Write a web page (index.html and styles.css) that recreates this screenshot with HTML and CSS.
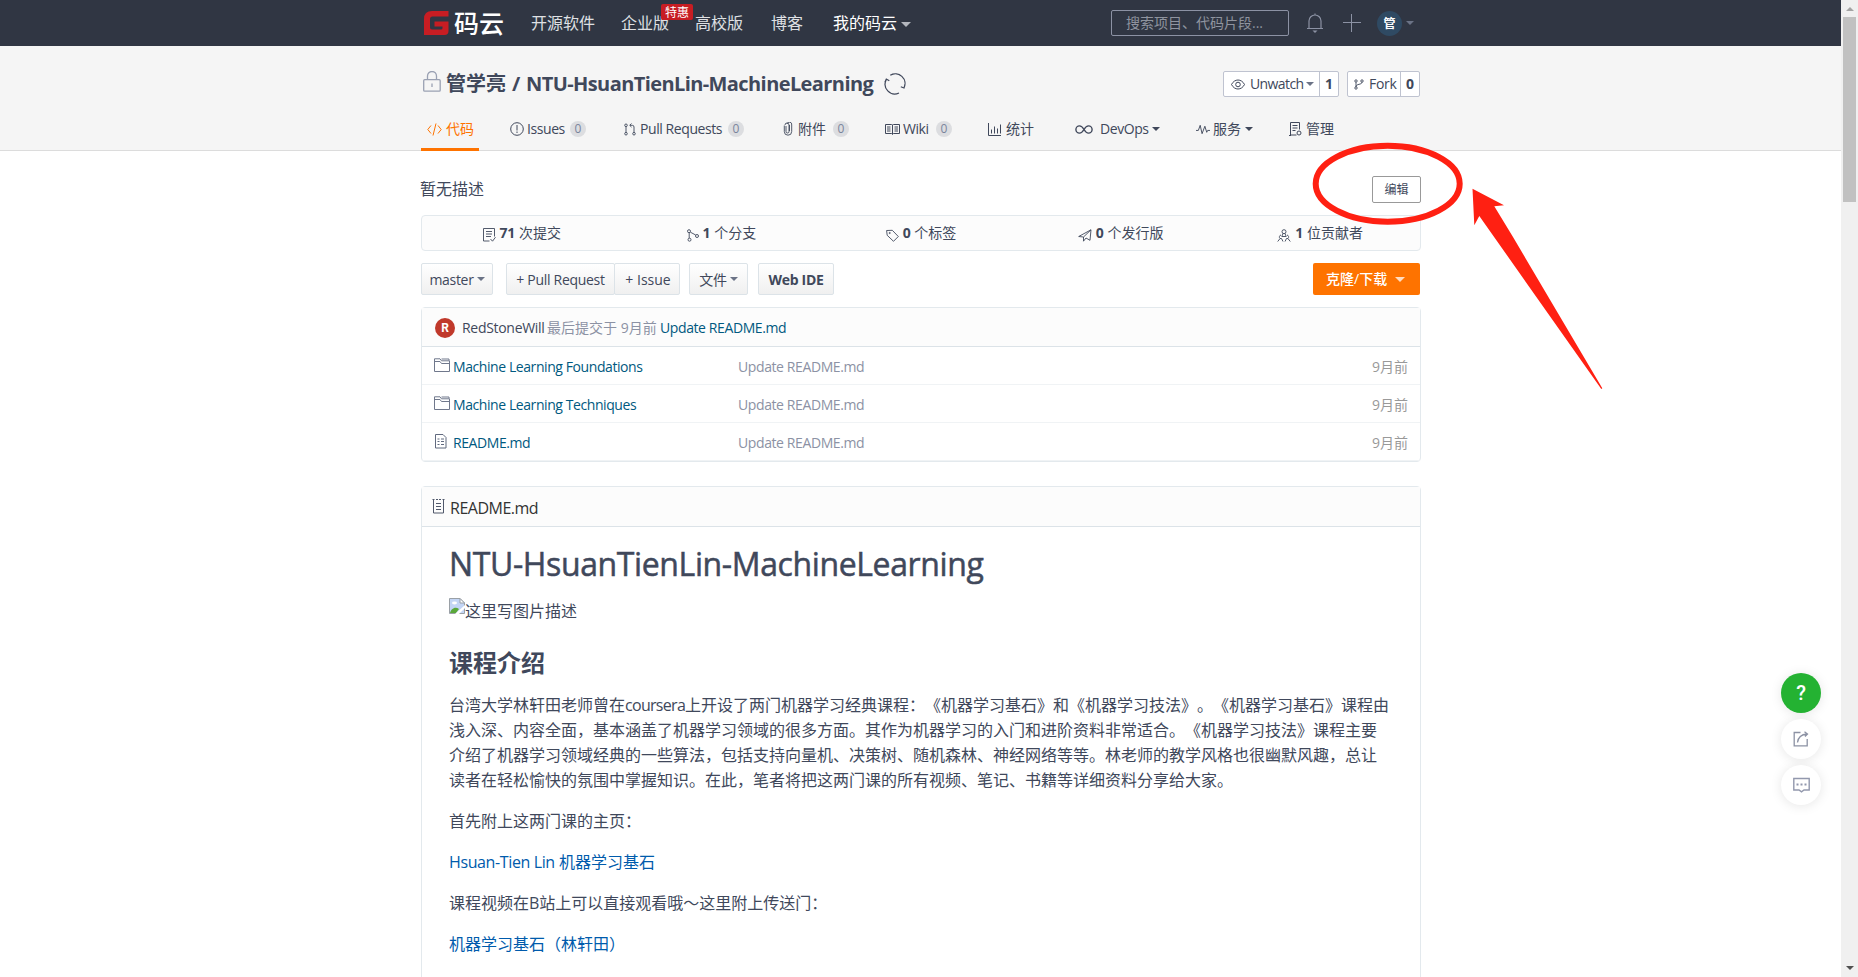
FILE: index.html
```html
<!DOCTYPE html>
<html lang="zh-CN">
<head>
<meta charset="utf-8">
<title>NTU-HsuanTienLin-MachineLearning</title>
<link rel="stylesheet" href="styles.css">
</head>
<body>
<div class="page">
  <header class="topbar">
    <div class="wrap topbar-in">
      <a class="logo">
        <svg width="25" height="24" viewBox="0 0 25 24"><path d="M24.500 0v5.500H8.500q-2.500 0-2.500 2.500v8.500q0 2 2 2h9q1.500 0 1.500-1.500v-1.500h-8v-5h14v9.500q0 4-4 4H0V8Q0 0 8 0z" fill="#c71d23"/></svg>
        <span>码云</span>
      </a>
      <nav class="nav">
        <a>开源软件</a>
        <a class="n2">企业版<i class="hot">特惠</i></a>
        <a class="n3">高校版</a>
        <a class="n4">博客</a>
        <a class="n5">我的码云<b class="caret big"></b></a>
      </nav>
      <div class="search">搜索项目、代码片段...</div>
      <svg class="bell" width="18" height="21" viewBox="0 0 18 21" fill="none" stroke="#8c92a4" stroke-width="1.2"><path d="M1 15.500h16M3 15.500V8a6 6 0 0 1 12 0v7.500M9 2V.5"/><path d="M6.500 17.500h5L9 20z" fill="#8c92a4" stroke="none"/></svg>
      <svg class="plus" width="18" height="18" viewBox="0 0 18 18" stroke="#8c92a4"><path d="M0 8.500h18M8.500 0v18"/></svg>
      <span class="me">管</span><b class="caret"></b>
    </div>
  </header>

  <section class="repohead">
    <div class="wrap">
      <div class="titlebar">
        <svg class="lock" width="18" height="21" viewBox="0 0 18 21" fill="none" stroke="#9aa1b3" stroke-width="1.300"><rect x=".7" y="8.700" width="16.500" height="11.500" rx="1"/><path d="M4.500 8.500V5a4.500 4.500 0 0 1 9 0v3.500M9 12.500v3.500"/></svg>
        <h2 class="title"><span class="owner">管学亮</span><span class="slash">/</span><span class="rname">NTU-HsuanTienLin-MachineLearning</span></h2>
        <svg class="sync" width="22" height="22" viewBox="0 0 22 22" fill="none" stroke="#40485b" stroke-width="1.200"><path d="M6.300 2.200A9.700 9.700 0 0 1 20 14.800M20.900 11.800L20 15l-3.200-1.200M15 20A9.700 9.700 0 0 1 2.400 6.500M.9 9.300L2.300 6l3 1.800"/></svg>
        <div class="btnpair watch">
          <span class="pl"><svg width="14" height="11" viewBox="0 0 14 11" fill="none" stroke="#40485b"><path d="M.5 5.500C3.500-.5 10.500-.5 13.500 5.500 10.500 11.500 3.500 11.500.5 5.500z"/><circle cx="7" cy="5.500" r="2.300"/></svg><em>Unwatch</em><b class="caret"></b></span><strong>1</strong>
        </div>
        <div class="btnpair fork">
          <span class="pl"><svg width="10" height="11" viewBox="0 0 10 11" fill="none" stroke="#40485b" stroke-width=".9"><circle cx="2" cy="2" r="1.200"/><circle cx="8" cy="2" r="1.200"/><circle cx="2" cy="9" r="1.200"/><path d="M2 3.200v4.600M8 3.200C8 6 2 4.500 2 7.800"/></svg><em>Fork</em></span><strong>0</strong>
        </div>
      </div>
      <div class="tabs">
        <a class="tab t1"><svg width="15" height="13" viewBox="0 0 15 13" fill="none" stroke="#fe7300"><path d="M4 2.500L.8 6.500 4 10.500M11 2.500l3.200 4-3.200 4M9 .5l-3 12"/></svg><em>代码</em></a>
        <a class="tab t2"><svg width="14" height="14" viewBox="0 0 14 14" fill="none" stroke="#40485b"><circle cx="7" cy="7" r="6.300"/><path d="M7 3v5.500M7 9.500V11"/></svg><em class="l">Issues</em><i class="cnt">0</i></a>
        <a class="tab t3"><svg width="12" height="13" viewBox="0 0 12 13" fill="none" stroke="#40485b" stroke-width=".9"><circle cx="2" cy="2.300" r="1.300"/><circle cx="2" cy="10.700" r="1.300"/><circle cx="10" cy="10.700" r="1.300"/><path d="M2 3.600v5.800M10 9.400V4q0-1.700-1.700-1.700H6M7.500.5L5.700 2.300l1.800 1.800"/></svg><em class="l">Pull Requests</em><i class="cnt">0</i></a>
        <a class="tab t4"><svg width="10" height="14" viewBox="0 0 10 14" fill="none" stroke="#40485b" stroke-width=".9"><path d="M3 4v5.500a1.500 1.500 0 0 0 3 0V3a2 2 0 0 0-4 0M1.300 3.500v6a3.700 3.700 0 0 0 7.400 0V3a2.400 2.400 0 0 0-4.700-1M6.500 3v6"/></svg><em>附件</em><i class="cnt">0</i></a>
        <a class="tab t5"><svg width="15" height="11" viewBox="0 0 15 11" fill="none" stroke="#40485b"><path d="M.5.5h6q1 0 1 1 0-1 1-1h6v9h-6q-1 0-1 1 0-1-1-1h-6zM7.500 1v9M2 3h3.500M2 5h3.500M2 7h3.500M9.500 3H13M9.500 5H13M9.500 7H13"/></svg><em class="l">Wiki</em><i class="cnt">0</i></a>
        <a class="tab t6"><svg width="14" height="13" viewBox="0 0 14 13" fill="none" stroke="#40485b"><path d="M.5 0v12.500H13M3.500 6.500v4M6.500 3.500v7M9.500 5.500v5M12.500 1.500v9"/></svg><em>统计</em></a>
        <a class="tab t7"><svg width="18" height="9" viewBox="0 0 18 9" fill="none" stroke="#40485b" stroke-width="1.400"><path d="M9 4.500C7.500 2 6.500.9 4.500.9a3.600 3.600 0 0 0 0 7.200C6.500 8.100 7.500 7 9 4.500s2.500-3.600 4.500-3.600a3.600 3.600 0 0 1 0 7.200C11.500 8.100 10.500 7 9 4.500z"/></svg><em class="l">DevOps</em><b class="caret dark"></b></a>
        <a class="tab t8"><svg width="14" height="11" viewBox="0 0 15 11" fill="none" stroke="#40485b"><path d="M0 6.500h2.500l2-5.500 2 9L9.500 2l2 6.500 1-2H15"/></svg><em>服务</em><b class="caret dark"></b></a>
        <a class="tab t9"><svg width="13" height="14" viewBox="0 0 13 14" fill="none" stroke="#40485b"><path d="M10.500 7.500V.5h-9v12.500h6M0 13.500h2M3.500 3.500h5M3.500 6h5M3.500 8.500h3"/><circle cx="10" cy="11" r="2"/></svg><em>管理</em></a>
      </div>
    </div>
  </section>

  <main class="wrap main">
    <div class="desc"><span>暂无描述</span><a class="edit">编辑</a></div>
    <div class="stats">
      <a><svg width="13" height="14" viewBox="0 0 13 14" fill="none" stroke="#40485b" stroke-width=".9"><path d="M11.500 8.500v-8H.5v12.500h6M3 3.500h6M3 6h6M3 8.500h5M7.500 11l2 2.200 3-4"/></svg><b>71</b>次提交</a>
      <a><svg width="12" height="13" viewBox="0 0 12 13" fill="none" stroke="#40485b" stroke-width=".9"><circle cx="2" cy="2.200" r="1.500"/><circle cx="2.500" cy="10.700" r="1.500"/><circle cx="10" cy="7" r="1.500"/><path d="M2.200 3.700v5.500M3.400 3.200L8.700 6"/></svg><b>1</b>个分支</a>
      <a><svg width="13" height="13" viewBox="0 0 13 13" fill="none" stroke="#40485b" stroke-width=".9"><path d="M.6 1.500l.6 4.800L7.500 12.300l4.800-4.800L6.300 1.300z"/><circle cx="3.700" cy="4" r=".6"/></svg><b>0</b>个标签</a>
      <a><svg width="14" height="13" viewBox="0 0 14 13" fill="none" stroke="#40485b" stroke-width=".9"><path d="M.7 7.500L13 .8l-1 10.500-4-2.300-2.500 3.200V8L13 .8M5.500 8L.7 7.500"/></svg><b>0</b>个发行版</a>
      <a><svg width="14" height="13" viewBox="0 0 14 13" fill="none" stroke="#40485b" stroke-width=".9"><circle cx="7" cy="2.700" r="2"/><path d="M6 4.500L4.800 7.500h4.400L8 4.500M4 6a2 2 0 0 0-.9 3.500L.7 12.500M4.500 9.500l1.500 3M10 6a2 2 0 0 1 .9 3.500l2.400 3M9.500 9.500l-1.500 3M3.100 9.500h1.400M9.500 9.500h1.400"/></svg><b>1</b>位贡献者</a>
    </div>
    <div class="tools">
      <a class="btn b1"><em>master</em><b class="caret"></b></a>
      <a class="btn b2"><em>+ Pull Request</em></a><a class="btn b3"><em>+ Issue</em></a>
      <a class="btn b4"><em>文件</em><b class="caret"></b></a>
      <a class="btn b5"><em>Web IDE</em></a>
      <a class="clone">克隆/下载<b class="caret"></b></a>
    </div>
    <div class="box files">
      <div class="last"><i class="ava">R</i><span class="who">RedStoneWill</span><span class="when">最后提交于 9月前</span><a class="lnk">Update README.md</a></div>
      <div class="row"><svg width="17" height="15" viewBox="0 0 17 15" fill="none" stroke="#70788c"><path d="M.5 13.500V.8h5.500l1.500 2h8v10.700zM.5 3.500H6l1.500 2 8 0M7.500 1h7.500v1.500" /></svg><a class="fn">Machine Learning Foundations</a><span class="msg">Update README.md</span><span class="age">9月前</span></div>
      <div class="row"><svg width="17" height="15" viewBox="0 0 17 15" fill="none" stroke="#70788c"><path d="M.5 13.500V.8h5.500l1.500 2h8v10.700zM.5 3.500H6l1.500 2 8 0M7.500 1h7.500v1.500" /></svg><a class="fn">Machine Learning Techniques</a><span class="msg">Update README.md</span><span class="age">9月前</span></div>
      <div class="row"><svg width="17" height="15" viewBox="0 0 17 15" fill="none" stroke="#616a7f"><path d="M1.500.5h7.500l3 3v10.500h-10.500zM3.500 5h2M7 5h3M3.500 7.500h2M7 7.500h3M3.500 10.500h2M7 10.500h3"/></svg><a class="fn">README.md</a><span class="msg">Update README.md</span><span class="age">9月前</span></div>
    </div>
    <div class="box readme">
      <div class="rhead"><svg width="13" height="15" viewBox="0 0 13 15" fill="none" stroke="#50586b"><path d="M1.500 1v13h10V1M.5.5h2M4 .5h2M7 .5h2M10.500.5h2M4 4.500h5M4 7.500h5M4 10.500h5"/></svg><span>README.md</span></div>
      <article class="md">
        <h1>NTU-HsuanTienLin-MachineLearning</h1>
        <p class="pic"><svg width="16" height="16" viewBox="0 0 16 16"><path d="M.5.500H11l4.500 4.500v10.500H.5z" fill="#c3d5f5" stroke="#9aa0a6"/><path d="M11 .5v4.500h4.500z" fill="#fff" stroke="#9aa0a6"/><ellipse cx="5.500" cy="5" rx="2.500" ry="1.400" fill="#fff"/><path d="M1 15c1-4 5-7 9-4l-3 4z" fill="#5aa83a"/><path d="M16 7v3l-6 6H6z" fill="#fff"/></svg><span>这里写图片描述</span></p>
        <h2>课程介绍</h2>
        <p class="para"><span>台湾大学林轩田老师曾在<em>coursera</em>上开设了两门机器学习经典课程：《机器学习基石》和《机器学习技法》。《机器学习基石》课程由</span><span>浅入深、内容全面，基本涵盖了机器学习领域的很多方面。其作为机器学习的入门和进阶资料非常适合。《机器学习技法》课程主要</span><span>介绍了机器学习领域经典的一些算法，包括支持向量机、决策树、随机森林、神经网络等等。林老师的教学风格也很幽默风趣，总让</span><span>读者在轻松愉快的氛围中掌握知识。在此，笔者将把这两门课的所有视频、笔记、书籍等详细资料分享给大家。</span></p>
        <p>首先附上这两门课的主页：</p>
        <p><a><em class="w">Hsuan-Tien Lin</em> 机器学习基石</a></p>
        <p>课程视频在B站上可以直接观看哦～这里附上传送门：</p>
        <p><a>机器学习基石（林轩田）</a></p>
      </article>
    </div>
  </main>
</div>

<aside class="scroll"><i class="up"></i><i class="thumb"></i><i class="down"></i></aside>

<div class="floaters">
  <a class="help">?</a>
  <a><svg width="16" height="16" viewBox="0 0 16 16" fill="none" stroke="#8c92a4" stroke-width="1.300"><path d="M7.500 1.500H1.200v13.300h13V8M4.500 11.500C5 7 8 3.500 14 3M11.500.7l3 2.300-2.500 2.500"/></svg></a>
  <a><svg width="17" height="16" viewBox="0 0 17 16" fill="none" stroke="#9298ad" stroke-width="1.400"><path d="M.8 1.500h15.400v11.500h-5.200L8.500 14.800 6 13H.8z"/><path d="M3.500 7.500h2M7.500 7.500h2M11.500 7.500h2" stroke-width="1.800"/></svg></a>
</div>

<svg class="marks" width="300" height="260" viewBox="1308 138 300 260"><ellipse cx="1387.700" cy="183.700" rx="72" ry="38" fill="none" stroke="#ff2012" stroke-width="6"/><path d="M1472.500 188.800L1504 205.300L1494.300 206.200L1513 237L1602.300 388.300L1601.300 389L1479.300 216L1474.300 225.300z" fill="#ff2012"/></svg>
</body>
</html>
```
FILE: styles.css
```css
* { box-sizing: border-box; }
body {
  margin: 0;
  width: 1858px;
  height: 977px;
  overflow: hidden;
  position: relative;
  background: #fff;
  color: #40485b;
  font: 14px/20px "Open Sans", "Noto Sans CJK SC", sans-serif;
  text-spacing-trim: space-all;
  white-space: nowrap;
}
em, i { font-style: normal; }
h1, h2, p { margin: 0; }
svg { flex: none; display: block; }
.page { width: 1841px; height: 977px; overflow: hidden; }
.wrap { width: 1000px; margin-left: 421px; }

.caret {
  display: inline-block;
  border: 4px solid transparent;
  border-top-color: #6b7386;
  border-bottom: 0;
  flex: none;
}
.caret.dark { border-top-color: #40485b; }
.caret.big { border-width: 5px 5px 0; border-top-color: #b4b7be; margin: 3px 0 0 4px; }

/* Top navigation */
.topbar { height: 46px; background: #303643; }
.topbar-in { height: 46px; display: flex; align-items: center; }
.logo { display: flex; width: 110px; padding-left: 3px; }
.logo span { margin-left: 5px; font-size: 25px; line-height: 24px; font-weight: 500; color: #fff; }
.nav { display: flex; width: 580px; font-size: 16px; color: #dfe0e3; }
.nav a { position: relative; width: 90px; display: flex; align-items: center; }
.nav .n2 { width: 74px; }
.nav .n3 { width: 76px; }
.nav .n4 { width: 62px; }
.nav .n5 { width: auto; color: #fff; }
.hot {
  position: absolute;
  left: 40px;
  top: -9px;
  width: 32px;
  height: 16px;
  border-radius: 2px;
  background: #c71d23;
  color: #fff;
  font-size: 12px;
  line-height: 18px;
  text-align: center;
}
.search {
  width: 178px;
  height: 26px;
  border: 1px solid #8c92a4;
  border-radius: 2px;
  padding-left: 14px;
  line-height: 24px;
  color: #8f949f;
}
.bell { margin-left: 17px; }
.plus { margin-left: 19px; }
.me {
  width: 25px;
  height: 25px;
  margin: 0 4px 0 16px;
  border-radius: 50%;
  background: #2f4a63;
  color: #fff;
  font-size: 12px;
  line-height: 25px;
  font-weight: 700;
  text-align: center;
}

/* Repository heading */
.repohead { height: 105px; background: #f5f5f5; border-bottom: 1px solid #dcdcdc; }
.titlebar { height: 61px; padding-top: 15px; display: flex; align-items: center; }
.lock { margin: -6px 5px 0 2px; }
.title { display: flex; font-size: 20px; line-height: 26px; font-weight: 700; }
.owner { width: 66px; }
.slash { width: 14px; }
.rname { width: 358px; letter-spacing: -.59px; }
.btnpair {
  display: flex;
  height: 26px;
  border: 1px solid #bfc3d0;
  border-radius: 2px;
  background: #fff;
  line-height: 24px;
}
.btnpair .pl { display: flex; align-items: center; }
.btnpair strong { border-left: 1px solid #bfc3d0; text-align: center; flex: 1; }
.watch { width: 116px; margin-left: 317px; }
.watch .pl { width: 95px; padding-left: 7px; }
.watch em { width: 56px; margin-left: 5px; letter-spacing: -.6px; }
.fork { width: 73px; margin-left: 8px; }
.fork .pl { width: 52px; padding-left: 6px; }
.fork em { margin-left: 5px; letter-spacing: -.3px; }

.tabs { display: flex; height: 44px; }
.tab { display: flex; align-items: center; height: 44px; }
.tab em { margin-left: 4px; line-height: 20px; }
.tab .l { letter-spacing: -.42px; }
.cnt {
  width: 16px;
  height: 16px;
  margin-left: auto;
  border-radius: 8px;
  background: #dcdde0;
  color: #7a849c;
  font-size: 12px;
  line-height: 16px;
  text-align: center;
}
.t1 { width: 58px; margin-right: 31px; padding-left: 6px; color: #fe7300; border-bottom: 3px solid #fe7300; padding-top: 3px; }
.t2 { width: 76px; margin-right: 38px; }
.t2 .l { margin-left: 3px; }
.t3 { width: 120px; margin-right: 39px; }
.t3 .l { margin-left: 4px; }
.t4 { width: 66px; margin-right: 36px; }
.t4 em { margin-left: 5px; }
.t5 { width: 67px; margin-right: 36px; }
.t5 .l { margin-left: 3px; }
.t6 { width: 87px; }
.t7 { width: 121px; }
.t7 em { width: 49px; margin: 0 3px 0 7px; }
.t8 { width: 93px; }
.t8 em { margin: 0 4px 0 3px; }
.t1, .t2, .t3, .t4, .t5, .t6, .t7, .t8, .t9 { flex: none; }

/* Description and statistics */
.desc { height: 64px; padding-top: 12px; display: flex; align-items: center; justify-content: space-between; font-size: 16px; }
.desc span { margin-left: -1px; }
.edit {
  width: 49px;
  height: 27px;
  border: 1px solid #999;
  border-radius: 2px;
  font-size: 12px;
  line-height: 26px;
  text-align: center;
}
.stats { display: grid; grid-template-columns: repeat(5, 1fr); height: 36px; border: 1px solid #e3e9ed; border-radius: 4px; background: #fcfcfc; }
.stats a { display: flex; align-items: center; justify-content: center; }
.stats svg { margin: 4px 4px 0 0; }
.stats b { margin-right: 4px; letter-spacing: -.3px; }

.tools { display: flex; margin: 12px 0; height: 32px; }
.btn {
  display: flex;
  align-items: center;
  justify-content: center;
  border: 1px solid #dce3e8;
  border-radius: 2px;
  background: linear-gradient(#fff, #f0f0f0);
}
.btn em { letter-spacing: -.3px; padding-top: 1px; }
.btn .caret { margin-left: 3px; }
.b1 { width: 72px; margin-right: 13px; }
.b2 { width: 109px; }
.b3 { width: 66px; margin: 0 9px 0 -1px; }
.b3 em { letter-spacing: 0; padding-left: 2px; }
.b4 { width: 59px; margin-right: 10px; }
.b5 { width: 76px; font-weight: 700; }
.clone {
  width: 107px;
  margin: 0 1px 0 auto;
  border-radius: 2px;
  background: #fe7300;
  color: #fff;
  display: flex;
  align-items: center;
  padding-left: 13px;
  font-weight: 500;
}
.clone .caret { margin-left: 8px; border-width: 5px 5px 0; border-top-color: #ffdcc0; }

/* File list */
.box { border: 1px solid #e3e9ed; border-radius: 4px; }
.files { height: 155px; }
.last { display: flex; align-items: center; height: 39px; padding: 2px 0 0 13px; background: #fcfcfc; border-bottom: 1px solid #dce3e8; letter-spacing: -.4px; }
.ava {
  width: 20px;
  height: 20px;
  border-radius: 50%;
  background: #c0392b;
  color: #fff;
  font: 700 12px/20px Roboto, sans-serif;
  text-align: center;
}
.who { width: 85px; margin-left: 7px; letter-spacing: -.3px; }
.when { width: 113px; color: #8c92a4; letter-spacing: 0; }
.lnk, .fn { color: #005980; }
.row { display: flex; align-items: center; height: 38px; padding: 2px 12px 0; border-bottom: 1px solid #f0f3f5; letter-spacing: -.4px; }
.fn { width: 285px; margin-left: 2px; letter-spacing: -.42px; }
.row svg { margin-top: -2px; }
.msg { color: #8c92a4; }
.age { margin-left: auto; color: #999; letter-spacing: 0; }

/* Readme */
.readme { margin-top: 24px; height: 560px; }
.rhead { display: flex; align-items: center; height: 40px; padding-left: 10px; background: #fcfcfc; border-bottom: 1px solid #dce3e8; font-size: 16px; color: #333; }
.rhead span { margin: 3px 0 0 5px; letter-spacing: -.5px; }
.md { padding: 17px 28px 0 27px; font-size: 16px; line-height: 25px; }
.md h1 { font-size: 32px; line-height: 40px; font-weight: 500; letter-spacing: -.38px; -webkit-text-stroke: .5px #40485b; }
.md h2 { font-size: 24px; line-height: 30px; font-weight: 700; margin: 27px 0 15px; }
.md p { margin-bottom: 16px; }
.md .pic { display: flex; height: 25px; margin: 12px 0 0; }
.pic svg { margin-top: 2px; }
.pic span { margin-top: 3px; }
.para span { display: block; }
.md em { letter-spacing: -.7px; }
.md .w { letter-spacing: -.38px; }
.md a { color: #005bac; }

/* Window scrollbar */
.scroll { position: absolute; top: 0; right: 0; width: 17px; height: 977px; background: #f0f0f0; display: flex; flex-direction: column; align-items: center; }
.up { border: 4px solid transparent; border-top: 0; border-bottom-color: #a3a3a3; margin: 7px 0 6px; }
.thumb { width: 13px; height: 185px; background: #c1c1c1; }
.down { border: 4px solid transparent; border-bottom: 0; border-top-color: #505050; margin: auto 0 7px; }

/* Floating actions */
.floaters { position: absolute; left: 1781px; top: 673px; display: grid; gap: 6px; }
.floaters a { width: 40px; height: 40px; border-radius: 50%; background: #fff; display: flex; align-items: center; justify-content: center; box-shadow: 0 1px 12px rgba(0, 0, 0, .1); }
.floaters .help { background: #24b232; color: #fff; font: 500 20px/40px Roboto, sans-serif; }

.marks { position: absolute; left: 1308px; top: 138px; }
```
